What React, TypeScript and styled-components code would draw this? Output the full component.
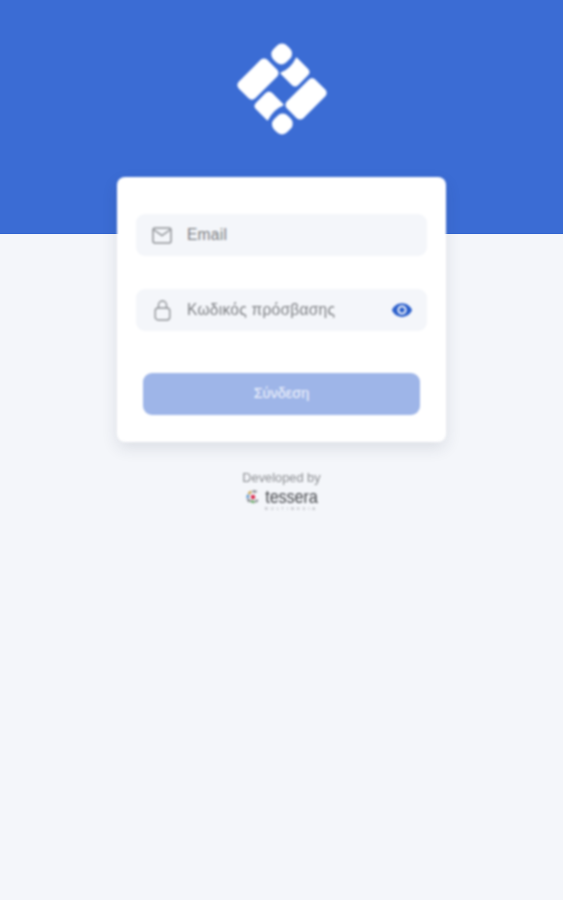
import styled, { createGlobalStyle } from "styled-components"

const GlobalStyle = createGlobalStyle`
    html, body {
        margin: 0;
        padding: 0;
        height: 100%;
        background-color: #f4f6fa;
        font-family: "Liberation Sans", Arial, sans-serif;
    }
`

const Page = styled('div')`
    min-height: 900px;
    display: flex;
    flex-direction: column;
    align-items: center;
`

const Header = styled('header')`
    align-self: stretch;
    height: 194px;
    padding-top: 39px;
    display: flex;
    justify-content: center;
    align-items: flex-start;
    background-color: #3b6cd4;
    border-bottom: 1px solid #2f63d0;

    svg {
        filter: blur(0.8px);
    }
`

const Card = styled('form')`
    width: 329px;
    height: 265px;
    margin-top: -57px;
    padding: 37px 19px 0;
    box-sizing: border-box;
    display: flex;
    flex-direction: column;
    background-color: #fff;
    border-radius: 8px;
    box-shadow: 0 6px 16px rgba(40, 50, 70, 0.12);
    filter: blur(0.8px);
`

const Field = styled('label')<{ $gap?: number }>`
    height: 42px;
    margin-bottom: ${p => p.$gap ?? 0}px;
    padding: 0 14px 0 16px;
    display: flex;
    align-items: center;
    background-color: #f4f6fa;
    border-radius: 9px;
`

const IconSlot = styled('span')`
    width: 20px;
    margin-right: 15px;
    display: flex;
    justify-content: center;
    color: #8f9296;

    svg {
        display: block;
    }
`

const Input = styled('input')`
    flex: 1;
    min-width: 0;
    padding: 0;
    border: 0;
    outline: 0;
    background: transparent;
    font-family: inherit;
    font-size: 15.6px;
    letter-spacing: 0.22px;
    color: #555;

    &::placeholder {
        color: #7c7e82;
        opacity: 1;
    }
`

const EyeButton = styled('button')`
    width: 22px;
    padding: 0;
    border: 0;
    display: flex;
    background: transparent;
    color: #2b5fcb;

    svg {
        display: block;
    }
`

const Submit = styled('button')`
    height: 42px;
    margin: 0 7px;
    padding: 0 0 2px;
    border: 0;
    border-radius: 9px;
    background-color: #9eb5e8;
    color: #f4f6fd;
    font-family: inherit;
    font-size: 14.5px;
`

const Credits = styled('footer')`
    margin-top: 28px;
    display: flex;
    flex-direction: column;
    align-items: center;
    filter: blur(0.8px);
`

const CreditsLabel = styled('p')`
    margin: 0;
    color: #8c8e92;
    font-size: 12.8px;
    line-height: 15px;
`

const Brand = styled('div')`
    margin-top: 3px;
    display: flex;
    align-items: flex-start;
    gap: 5px;
`

const BrandText = styled('div')`
    display: flex;
    flex-direction: column;
    align-items: center;
`

const BrandName = styled('span')`
    margin: 0 -4px;
    color: #4a4c50;
    font-size: 19px;
    line-height: 17px;
    letter-spacing: -0.2px;
    transform: scaleX(0.86);
`

const BrandTag = styled('span')`
    margin-top: 3px;
    color: #9a9ca0;
    font-size: 3.5px;
    line-height: 3px;
    letter-spacing: 3.2px;
`

const LogoMark = () => (
    <svg width="100" height="100" viewBox="-50 -50 100 100" fill="#fff" stroke="#fff" strokeWidth="1.4" strokeLinejoin="round">
        <g transform="rotate(-45)">
            <rect x="-29.5" y="-35" width="39" height="22" rx="4" />
            <rect x="15.5" y="-33.5" width="18" height="17" rx="6.5" />
            <path d="M10.5 -11.8 A30 30 0 0 0 32 -11.5 L32 4 Q32 8 28 8 L14.5 8 Q10.5 8 10.5 4 Z" />
            <g transform="rotate(180)">
                <rect x="-29.5" y="-35" width="39" height="22" rx="4" />
                <rect x="15.5" y="-33.5" width="18" height="17" rx="6.5" />
                <path d="M10.5 -11.8 A30 30 0 0 0 32 -11.5 L32 4 Q32 8 28 8 L14.5 8 Q10.5 8 10.5 4 Z" />
            </g>
        </g>
    </svg>
)

const MailIcon = () => (
    <svg width="20" height="17" viewBox="0 0 20 17" fill="none" stroke="currentColor" strokeWidth="1.5">
        <rect x="1" y="1" width="18" height="15" rx="2" />
        <path d="M1.5 2.5 L10 8.5 L18.5 2.5" />
    </svg>
)

const LockIcon = () => (
    <svg width="17" height="21" viewBox="0 0 17 21" fill="none" stroke="currentColor" strokeWidth="1.4">
        <rect x="1.2" y="8" width="14.6" height="12" rx="3" />
        <path d="M4.5 8 V5 A4 4 0 0 1 12.5 5 V8" />
    </svg>
)

const EyeIcon = () => (
    <svg width="22" height="22" viewBox="0 0 24 24" fill="currentColor">
        <path d="M12 4.5C7 4.5 2.73 7.61 1 12c1.73 4.39 6 7.5 11 7.5s9.27-3.11 11-7.5c-1.73-4.39-6-7.5-11-7.5zM12 17c-2.76 0-5-2.24-5-5s2.24-5 5-5 5 2.24 5 5-2.24 5-5 5zm0-8c-1.66 0-3 1.34-3 3s1.34 3 3 3 3-1.34 3-3-1.34-3-3-3z" />
    </svg>
)

const TesseraMark = () => (
    <svg width="15" height="17" viewBox="0 0 15 17">
        <circle cx="8" cy="9" r="2.2" fill="#d8284a" />
        <path d="M12.5 3 L8.5 2 L6.5 4 L10.5 5 Z" fill="#8a8d92" />
        <path d="M6 2.5 L3 4.5 L4 7 L6.5 5 Z" fill="#c9a24a" />
        <path d="M2.5 6 L1 9.5 L3.5 10.5 L4.5 7.5 Z" fill="#5f9ad0" />
        <path d="M1.5 11 L3.5 14.5 L6 13 L4 10.5 Z" fill="#8a8d92" />
        <path d="M5 14 L9 15.5 L10 13 L6.5 12 Z" fill="#6aa86a" />
        <path d="M10.5 15 L13.5 13 L12 11 L10 13 Z" fill="#8a8d92" />
    </svg>
)

const App = (): JSX.Element => {
    return (
        <Page>
            <GlobalStyle />

            <Header>
                <LogoMark />
            </Header>

            <Card>
                <Field $gap={33}>
                    <IconSlot><MailIcon /></IconSlot>
                    <Input type="email" placeholder="Email" />
                </Field>

                <Field $gap={42}>
                    <IconSlot><LockIcon /></IconSlot>
                    <Input type="password" placeholder="Κωδικός πρόσβασης" />
                    <EyeButton type="button"><EyeIcon /></EyeButton>
                </Field>

                <Submit type="submit" disabled>Σύνδεση</Submit>
            </Card>

            <Credits>
                <CreditsLabel>Developed by</CreditsLabel>
                <Brand>
                    <TesseraMark />
                    <BrandText>
                        <BrandName>tessera</BrandName>
                        <BrandTag>MULTIMEDIA</BrandTag>
                    </BrandText>
                </Brand>
            </Credits>
        </Page>
    )
}

export default App
